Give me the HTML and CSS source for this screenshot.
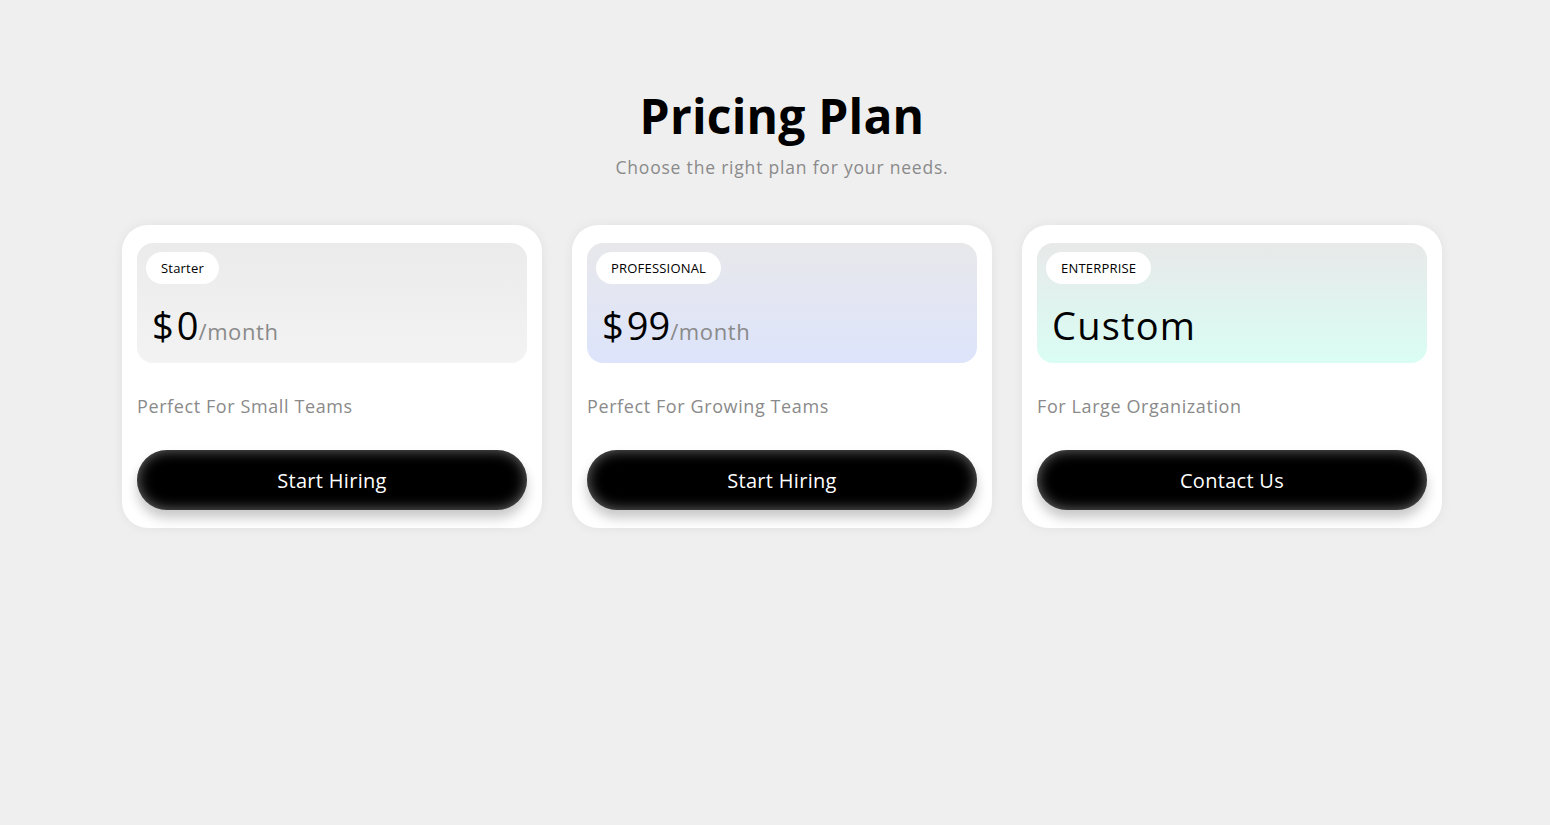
FILE: index.html
```html
<!DOCTYPE html>
<html lang="en">
<head>
<meta charset="utf-8">
<title>Pricing Plan</title>
<link rel="stylesheet" href="styles.css">
</head>
<body>
<main class="page">
  <header class="head">
    <h1 class="title">Pricing Plan</h1>
    <p class="subtitle">Choose the right plan for your needs.</p>
  </header>
  <section class="plans">
    <article class="card">
      <div class="top top-starter">
        <span class="badge">Starter</span>
        <div class="price"><span class="cur">$</span>0<span class="per">/month</span></div>
      </div>
      <p class="desc">Perfect For Small Teams</p>
      <button class="btn">Start Hiring</button>
    </article>
    <article class="card">
      <div class="top top-pro">
        <span class="badge">PROFESSIONAL</span>
        <div class="price"><span class="cur">$</span>99<span class="per">/month</span></div>
      </div>
      <p class="desc">Perfect For Growing Teams</p>
      <button class="btn">Start Hiring</button>
    </article>
    <article class="card">
      <div class="top top-ent">
        <span class="badge">ENTERPRISE</span>
        <div class="price price-custom">Custom</div>
      </div>
      <p class="desc">For Large Organization</p>
      <button class="btn">Contact Us</button>
    </article>
  </section>
</main>
</body>
</html>
```

FILE: styles.css
```css
* { box-sizing: border-box; }
html, body { margin: 0; padding: 0; }
body {
  background: #efefef;
  font-family: "Open Sans", "Liberation Sans", sans-serif;
  color: #000;
  height: 825px;
  overflow: hidden;
}
.page {
  padding: 86px 0 0 14px;
  display: flex;
  flex-direction: column;
  align-items: center;
}
.head { text-align: center; }
.title {
  margin: 0;
  font-size: 48px;
  line-height: 60px;
  font-weight: 700;
  letter-spacing: 0.2px;
}
.subtitle {
  margin: 9px 0 0;
  font-size: 17.5px;
  line-height: 24px;
  color: #8a8a8a;
  letter-spacing: 0.8px;
}
.plans {
  margin-top: 46px;
  display: flex;
  gap: 30px;
}
.card {
  width: 420px;
  height: 303px;
  background: #fff;
  border-radius: 26px;
  padding: 18px 15px 18px;
  box-shadow: 0 0 12px rgba(0,0,0,0.06);
  display: flex;
  flex-direction: column;
}
.top {
  height: 120px;
  border-radius: 16px;
  padding: 9px 9px 0;
}
.top-starter { background: linear-gradient(to bottom, #ebebeb, #f3f3f3); }
.top-pro { background: linear-gradient(to bottom, #e8e8eb, #dde4fb); }
.top-ent { background: linear-gradient(to bottom, #e8e9e9, #d9fdf4); }
.badge {
  display: inline-block;
  height: 32px;
  line-height: 32px;
  padding: 0 15px;
  background: #fff;
  border-radius: 16px;
  font-size: 13px;
  letter-spacing: 0.2px;
}
.price {
  margin: 16px 0 0 6px;
  font-size: 38px;
  line-height: 50px;
  font-weight: 400;
}
.price-custom { letter-spacing: 1.2px; }
.cur { margin-right: 3px; }
.per {
  font-size: 22px;
  color: #8a8a8a;
  letter-spacing: 0.6px;
}
.desc {
  margin: 29px 0 0;
  font-size: 18px;
  line-height: 28px;
  color: #8a8a8a;
  letter-spacing: 0.6px;
}
.btn {
  margin-top: auto;
  height: 60px;
  width: 100%;
  border: 0;
  border-radius: 30px;
  background: #000;
  color: #fff;
  font-family: inherit;
  font-size: 20px;
  letter-spacing: 0.3px;
  box-shadow: inset 0 0 14px rgba(255,255,255,0.45), 0 8px 12px rgba(0,0,0,0.22);
}
```
